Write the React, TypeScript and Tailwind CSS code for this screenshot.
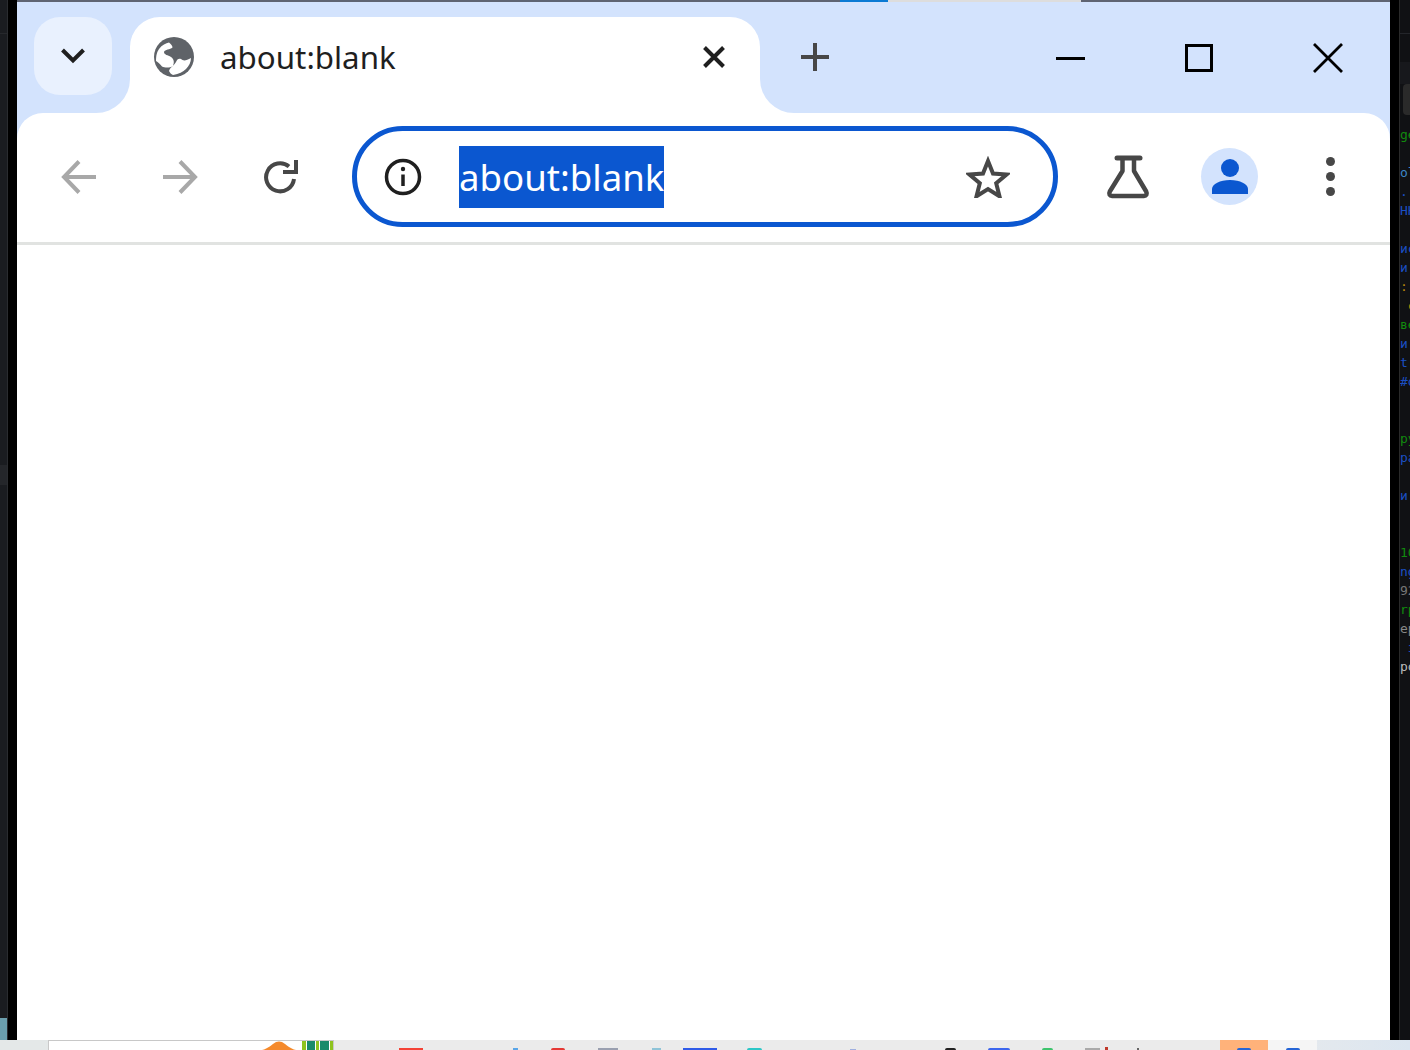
const codeLines = [
  { text: 'ge', color: 'text-[#118a0e]' },
  { text: '', color: '' },
  { text: 'ol', color: 'text-[#3d87c8]' },
  { text: '. .', color: 'text-[#1b4fc4]' },
  { text: 'HH', color: 'text-[#1b4fc4]' },
  { text: '', color: '' },
  { text: 'ис', color: 'text-[#1b4fc4]' },
  { text: 'и', color: 'text-[#1b4fc4]' },
  { text: ':', color: 'text-[#b8860b]' },
  { text: ' c', color: 'text-[#b8860b]' },
  { text: 'ве', color: 'text-[#118a0e]' },
  { text: 'и', color: 'text-[#1b4fc4]' },
  { text: 't', color: 'text-[#1b4fc4]' },
  { text: '#o', color: 'text-[#1b4fc4]' },
  { text: '', color: '' },
  { text: '', color: '' },
  { text: 'py', color: 'text-[#118a0e]' },
  { text: 'pa', color: 'text-[#1b4fc4]' },
  { text: '', color: '' },
  { text: 'и', color: 'text-[#1b4fc4]' },
  { text: '', color: '' },
  { text: '', color: '' },
  { text: '10', color: 'text-[#118a0e]' },
  { text: 'ng', color: 'text-[#1b4fc4]' },
  { text: '92', color: 'text-[#777777]' },
  { text: 'rp', color: 'text-[#118a0e]' },
  { text: 'ep', color: 'text-[#888888]' },
  { text: ' з', color: 'text-[#1b4fc4]' },
  { text: 'po', color: 'text-[#bbbbbb]' },
]

function TabSearchIcon() {
  return (
    <svg width="26" height="18" viewBox="0 0 26 18" fill="none">
      <path d="M2.500 3l10.500 10.500L23.500 3" stroke="#1f1f1f" strokeWidth="4" />
    </svg>
  )
}

function GlobeIcon() {
  return (
    <svg width="42" height="42" viewBox="0 0 42 42">
      <circle cx="21" cy="21" r="20" fill="#5f6368" />
      <path
        d="M3 25C3 19 4 16 6 13C9 9 13 7 16 6.500C18 8 19.500 10 19.500 11.500C17 14 12 13 11 16C11 19 15 19 18 21C21 23 21.500 26 20 30C17 32 12 32 9 30.500C7 28 5 26 3 25Z"
        fill="#fff"
      />
      <path
        d="M16 35C17 31 21 30 23 26C24 23 26 22 28 23C30 25 33 25 38 22C38 26 36 30 33 33C30 36 26 38 20 39C18 38 17 37 16 35Z"
        fill="#fff"
      />
    </svg>
  )
}

function CloseTabIcon() {
  return (
    <svg width="24" height="24" viewBox="0 0 24 24" fill="none">
      <path d="M2.500 2.500l19 19M21.500 2.500l-19 19" stroke="#1f1f1f" strokeWidth="4" />
    </svg>
  )
}

function PlusIcon() {
  return (
    <svg width="30" height="30" viewBox="0 0 30 30" fill="none">
      <path d="M15 1v28M1 15h28" stroke="#474747" strokeWidth="4" />
    </svg>
  )
}

function ArrowIcon({ flip }: { flip?: boolean }) {
  return (
    <svg width="36" height="36" viewBox="0 0 36 36" fill="none" className={flip ? 'rotate-180' : ''}>
      <path d="M35 18H4M18 2.500L3 18 18 33.500" stroke="#a8a8a8" strokeWidth="4" />
    </svg>
  )
}

function ReloadIcon() {
  return (
    <svg width="36" height="36" viewBox="0 0 36 36" fill="none">
      <path d="M31 20a14 14 0 1 1-5-12.500" stroke="#474747" strokeWidth="4" />
      <path d="M20 13h13V1" stroke="#474747" strokeWidth="4" />
    </svg>
  )
}

function InfoIcon() {
  return (
    <svg width="38" height="38" viewBox="0 0 38 38" fill="none">
      <circle cx="19" cy="19" r="16.500" stroke="#1f1f1f" strokeWidth="3.500" />
      <path d="M19 16.500V28" stroke="#1f1f1f" strokeWidth="3.500" />
      <circle cx="19" cy="11" r="2.200" fill="#1f1f1f" />
    </svg>
  )
}

function StarIcon() {
  return (
    <svg width="44" height="42" viewBox="0 0 44 42" fill="none">
      <path
        d="M22 5l5 12.500 13.500 1-10.300 8.800 3.300 13L22 33l-11.500 7.300 3.300-13L3.500 18.500l13.500-1z"
        stroke="#474747"
        strokeWidth="4"
      />
    </svg>
  )
}

function FlaskIcon() {
  return (
    <svg width="44" height="44" viewBox="0 0 44 44" fill="none">
      <path d="M11 3h23" stroke="#474747" strokeWidth="5" strokeLinecap="round" />
      <path
        d="M16.500 4v12L3.800 36.500C2.500 39 3.800 41 6 41h32c2.200 0 3.500-2 2.200-4.500L28 16V4"
        stroke="#474747"
        strokeWidth="4.500"
        strokeLinejoin="round"
      />
    </svg>
  )
}

function AvatarIcon() {
  return (
    <div className="flex h-[57px] w-[57px] items-center justify-center rounded-full bg-[#d3e3fd]">
      <svg width="36" height="36" viewBox="0 0 36 36">
        <circle cx="18" cy="9" r="9" fill="#0b57d0" />
        <path d="M0 35v-5c0-5 8-9 18-9s18 4 18 9v5z" fill="#0b57d0" />
      </svg>
    </div>
  )
}

function MoreIcon() {
  return (
    <div className="flex flex-col gap-[6px]">
      <span className="h-[9px] w-[9px] rounded-full bg-[#474747]" />
      <span className="h-[9px] w-[9px] rounded-full bg-[#474747]" />
      <span className="h-[9px] w-[9px] rounded-full bg-[#474747]" />
    </div>
  )
}

function TabBar() {
  return (
    <div className="flex h-[111px] shrink-0 items-start bg-[#d3e3fd] pt-[15px]">
      <button type="button" className="relative z-10 ml-[17px] flex h-[78px] w-[78px] items-center justify-center rounded-[26px] bg-[#e9f1fe]">
        <TabSearchIcon />
      </button>
      <div className="relative ml-[18px] flex h-[96px] w-[630px] items-start rounded-t-[30px] bg-white pl-[23px] pr-[34px] pt-[19px]">
        <span className="absolute bottom-0 right-full h-[34px] w-[34px] bg-white">
          <span className="block h-full w-full rounded-br-[34px] bg-[#d3e3fd]" />
        </span>
        <GlobeIcon />
        <span className="ml-[25px] text-[31.3px] leading-[42px] text-[#1f1f1f]">about:blank</span>
        <span className="ml-auto mt-[9px]">
          <CloseTabIcon />
        </span>
        <span className="absolute bottom-0 left-full h-[34px] w-[34px] bg-white">
          <span className="block h-full w-full rounded-bl-[34px] bg-[#d3e3fd]" />
        </span>
      </div>
      <button type="button" className="ml-[40px] mt-[25px]">
        <PlusIcon />
      </button>
      <div className="ml-auto mt-[26px] flex gap-[5px]">
        <button type="button" className="flex h-[30px] w-[124px] items-center justify-center">
          <span className="h-[3px] w-[29px] bg-black" />
        </button>
        <button type="button" className="flex h-[30px] w-[124px] items-center justify-center">
          <span className="h-[28px] w-[28px] border-[3px] border-black" />
        </button>
        <button type="button" className="flex h-[30px] w-[124px] items-center justify-center">
          <svg width="30" height="30" viewBox="0 0 30 30" fill="none">
            <path d="M1 1l28 28M29 1L1 29" stroke="#000" strokeWidth="2.800" />
          </svg>
        </button>
      </div>
    </div>
  )
}

function Toolbar() {
  return (
    <div className="relative flex h-[132px] shrink-0 items-start rounded-t-[26px] border-b-[3px] border-[#e1e3e1] bg-white pl-[11px] pt-[13px]">
      <button type="button" className="flex h-[101px] w-[101px] items-center justify-center">
        <ArrowIcon />
      </button>
      <button type="button" className="flex h-[101px] w-[101px] items-center justify-center">
        <ArrowIcon flip />
      </button>
      <button type="button" className="flex h-[101px] w-[101px] items-center justify-center">
        <ReloadIcon />
      </button>
      <div className="ml-[21px] flex h-[101px] w-[706px] items-center rounded-full border-[5px] border-[#0b57d0] pl-[27px] pr-[43px]">
        <InfoIcon />
        <span className="ml-[37px] flex h-[62px] items-center bg-[#0b57d0] pt-[1px] text-[36.600px] text-white">about:blank</span>
        <span className="ml-auto">
          <StarIcon />
        </span>
      </div>
      <button type="button" className="ml-[19px] flex h-[101px] w-[101px] items-center justify-center">
        <FlaskIcon />
      </button>
      <button type="button" className="ml-[1px] flex h-[101px] w-[101px] items-center justify-center">
        <AvatarIcon />
      </button>
      <button type="button" className="flex h-[101px] w-[101px] items-center justify-center">
        <MoreIcon />
      </button>
    </div>
  )
}

function Taskbar() {
  return (
    <div className="flex h-[10px] shrink-0 items-start overflow-hidden bg-[#ebebeb]">
      <div className="h-full w-[48px] bg-[#e4e8e8]" />
      <div className="flex h-full w-[286px] items-start border-x border-t border-[#c8c8c8] bg-white">
        <svg width="34" height="9" viewBox="0 0 34 9" className="ml-[213px]">
          <path d="M0 9C6 8 10 3 14 1Q17 0 20 1C24 3 28 8 34 9Z" fill="#f58a2c" />
        </svg>
        <span className="ml-[6px] flex h-[10px]">
          <span className="w-[4px] bg-[#8fc31f]" />
          <span className="ml-[1px] w-[8px] bg-[#1a8a6a]" />
          <span className="ml-[1px] w-[3px] bg-[#8fc31f]" />
          <span className="ml-[1px] w-[9px] bg-[#1a8a6a]" />
          <span className="ml-[1px] w-[3px] bg-[#8fc31f]" />
        </span>
      </div>
      <span className="ml-[65px] mt-[8px] h-[2px] w-[24px] bg-[#f44336]" />
      <span className="ml-[90px] mt-[8px] h-[2px] w-[5px] bg-[#5aa6e8]" />
      <span className="ml-[33px] mt-[8px] h-[2px] w-[14px] rounded-t-full bg-[#e53935]" />
      <span className="ml-[33px] mt-[8px] h-[2px] w-[20px] bg-[#9aa0b0]" />
      <span className="ml-[34px] mt-[8px] h-[2px] w-[9px] bg-[#8fc4d8]" />
      <span className="ml-[22px] mt-[8px] h-[2px] w-[34px] bg-[#2f5be8]" />
      <span className="ml-[30px] mt-[8px] h-[2px] w-[15px] rounded-t-full bg-[#2cc7c7]" />
      <span className="ml-[88px] mt-[9px] h-[1px] w-[6px] bg-[#a0b0e0]" />
      <span className="ml-[89px] mt-[8px] h-[2px] w-[11px] rounded-t-full bg-[#222222]" />
      <span className="ml-[32px] mt-[8px] h-[2px] w-[22px] rounded-t-md bg-[#3d66ee]" />
      <span className="ml-[32px] mt-[8px] h-[2px] w-[11px] rounded-t-full bg-[#3ec46d]" />
      <span className="ml-[32px] mt-[8px] h-[2px] w-[15px] bg-[#aaaaaa]" />
      <span className="ml-[5px] mt-[7px] h-[3px] w-[3px] bg-[#c0392b]" />
      <span className="ml-[29px] mt-[8px] h-[2px] w-[2px] bg-[#666666]" />
      <div className="ml-auto flex h-full w-[190px] bg-gradient-to-r from-[#ebebeb] to-[#dce6f0]">
        <span className="flex h-full w-[48px] justify-center bg-[#ffb27a]">
          <span className="mt-[8px] h-[2px] w-[14px] rounded-t-full bg-[#2565d6]" />
        </span>
        <span className="flex h-full w-[49px] justify-center bg-[#f5f5f5]">
          <span className="mt-[8px] h-[2px] w-[14px] rounded-t-full bg-[#2565d6]" />
        </span>
      </div>
    </div>
  )
}

export default function App() {
  return (
    <div className="flex h-[1050px] w-[1410px] flex-col overflow-hidden bg-black font-['Noto_Sans',sans-serif]">
      <div className="flex min-h-0 flex-1">
        <div className="flex w-[17px] shrink-0">
          <div className="flex w-[8px] flex-col border-r border-[#2a2c30] bg-[#1a1c20]">
            <div className="h-[34px] shrink-0 border-b border-[#26282c]" />
            <div className="h-[431px] shrink-0" />
            <div className="h-[20px] shrink-0 bg-[#24262a]" />
            <div className="flex-1" />
            <div className="h-[22px] shrink-0 bg-[#6b9fae]" />
          </div>
        </div>
        <div className="flex w-[1373px] shrink-0 flex-col">
          <div className="flex h-[2px] shrink-0 bg-[#5f6472]">
            <div className="ml-[823px] w-[48px] bg-[#0a7ad4]" />
            <div className="w-[193px] bg-[#dddddd]" />
          </div>
          <TabBar />
          <div className="flex min-h-0 flex-1 flex-col bg-[#d3e3fd]">
            <Toolbar />
            <div className="flex-1 bg-white" />
          </div>
        </div>
        <div className="ml-[9px] flex-1 overflow-hidden border-l border-[#2a2a2a] bg-[#101114] font-['DejaVu_Sans_Mono',monospace] text-[13px] leading-[19px]">
          <div className="h-[34px] border-b border-[#23252a]" />
          <div className="h-[28px]" />
          <div className="h-[22px] bg-[#17181c]" />
          <div className="ml-[3px] h-[31px] rounded-l-[4px] bg-[#2a2a2a]" />
          <div className="h-[10px]" />
          {codeLines.map((line, index) => (
            <div key={index} className={`h-[19px] whitespace-pre ${line.color}`}>
              {line.text}
            </div>
          ))}
        </div>
      </div>
      <Taskbar />
    </div>
  )
}
